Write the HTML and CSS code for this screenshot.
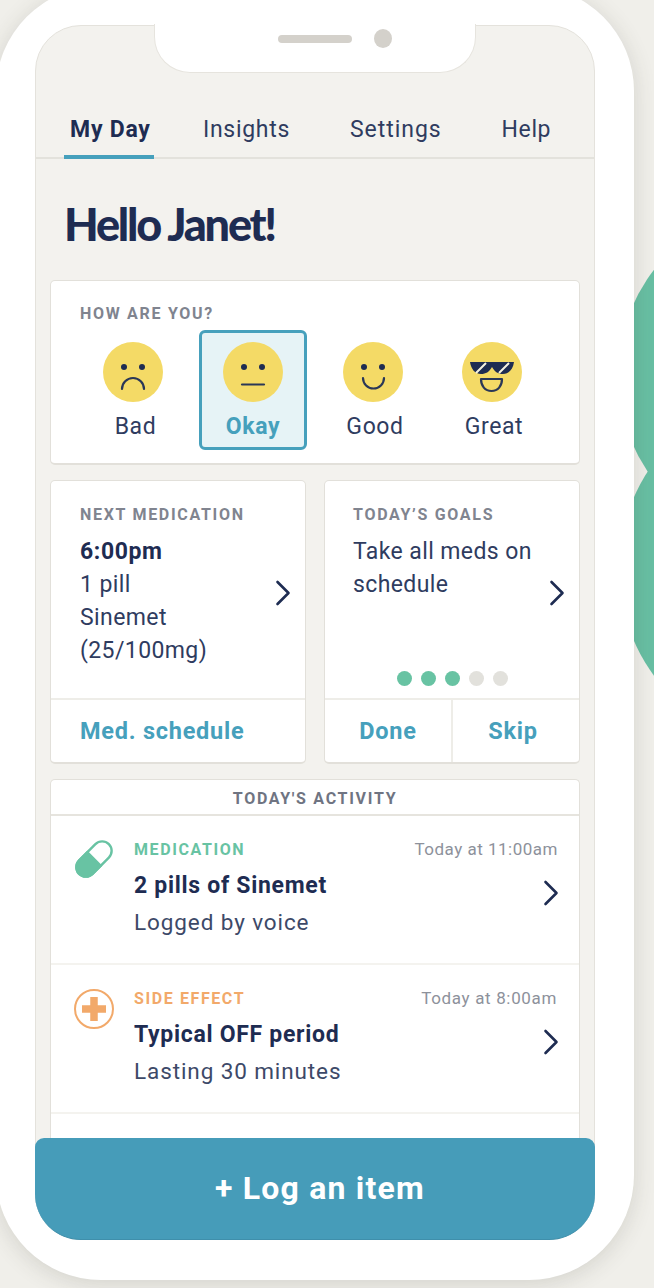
FILE: index.html
```html
<!DOCTYPE html>
<html lang="en">
<head>
<meta charset="utf-8">
<title>My Day</title>
<link rel="stylesheet" href="styles.css">
</head>
<body>
<div class="blob blob-top"></div>
<div class="blob blob-bottom"></div>
<div class="phone">
  <div class="notch">
    <span class="speaker"></span>
    <span class="camera"></span>
  </div>
  <main class="screen">
    <nav class="tabs">
      <a class="tab tab-active tab-day">My Day</a>
      <a class="tab tab-insights">Insights</a>
      <a class="tab tab-settings">Settings</a>
      <a class="tab tab-help">Help</a>
    </nav>
    <div class="content">
      <h1 class="greeting">Hello Janet!</h1>

      <section class="card mood-card">
        <h2 class="label">HOW ARE YOU?</h2>
        <div class="moods">
          <div class="mood mood-bad">
            <svg class="face" viewBox="0 0 60 60"><circle cx="30" cy="30" r="30" fill="#f4da66"/><circle cx="21" cy="25" r="3" fill="#1e2c52"/><circle cx="39" cy="25" r="3" fill="#1e2c52"/><path d="M19 47a11 11 0 0 1 22 0" fill="none" stroke="#2a3757" stroke-width="2.2" stroke-linecap="round"/></svg>
            <span class="mood-name">Bad</span>
          </div>
          <div class="mood mood-selected">
            <svg class="face" viewBox="0 0 60 60"><circle cx="30" cy="30" r="30" fill="#f4da66"/><circle cx="21" cy="25" r="3" fill="#1e2c52"/><circle cx="39" cy="25" r="3" fill="#1e2c52"/><path d="M19 42.500h22" fill="none" stroke="#2a3757" stroke-width="2.2" stroke-linecap="round"/></svg>
            <span class="mood-name">Okay</span>
          </div>
          <div class="mood mood-good">
            <svg class="face" viewBox="0 0 60 60"><circle cx="30" cy="30" r="30" fill="#f4da66"/><circle cx="21" cy="25" r="3" fill="#1e2c52"/><circle cx="39" cy="25" r="3" fill="#1e2c52"/><path d="M20 36a10.500 10.500 0 0 0 21 0" fill="none" stroke="#2a3757" stroke-width="2.200" stroke-linecap="round"/></svg>
            <span class="mood-name">Good</span>
          </div>
          <div class="mood mood-great">
            <svg class="face" viewBox="0 0 60 60"><circle cx="30" cy="30" r="30" fill="#f4da66"/><path d="M8 20h44c-1 7-5 12-11 12-5 0-8-2-11-7-3 5-6 7-11 7-6 0-10-5-11-12z" fill="#1e2c52"/><path d="M14 31l10-10M37 31l10-10" stroke="#f4f1e0" stroke-width="2"/><path d="M19 37h21c0 7-4 12-10.500 12S19 44 19 37z" fill="none" stroke="#2a3757" stroke-width="2.200" stroke-linejoin="round"/></svg>
            <span class="mood-name">Great</span>
          </div>
        </div>
      </section>

      <div class="pair">
        <section class="card tile">
          <div class="tile-body">
            <div class="tile-main">
              <h2 class="label">NEXT MEDICATION</h2>
              <p class="tile-text"><strong>6:00pm</strong><br>1 pill<br>Sinemet<br>(25/100mg)</p>
            </div>
            <svg class="chevron" viewBox="0 0 16 26"><path d="M2.500 2l11 11-11 11" fill="none" stroke="#1e2c52" stroke-width="2.600" stroke-linecap="round" stroke-linejoin="round"/></svg>
          </div>
          <div class="tile-foot"><a class="action action-left">Med. schedule</a></div>
        </section>
        <section class="card tile">
          <div class="tile-body tile-body-goals">
            <div class="tile-main">
              <h2 class="label">TODAY’S GOALS</h2>
              <p class="tile-text">Take all meds on<br>schedule</p>
            </div>
            <svg class="chevron" viewBox="0 0 16 26"><path d="M2.500 2l11 11-11 11" fill="none" stroke="#1e2c52" stroke-width="2.600" stroke-linecap="round" stroke-linejoin="round"/></svg>
            <div class="dots">
              <span class="dot dot-on"></span><span class="dot dot-on"></span><span class="dot dot-on"></span><span class="dot"></span><span class="dot"></span>
            </div>
          </div>
          <div class="tile-foot">
            <a class="action action-half">Done</a>
            <a class="action action-half">Skip</a>
          </div>
        </section>
      </div>

      <section class="card activity">
        <h2 class="label activity-head">TODAY'S ACTIVITY</h2>
        <article class="entry">
          <svg class="entry-icon" viewBox="0 0 40 40"><g transform="rotate(-45 20 20)"><rect x="-1" y="10.500" width="42" height="19" rx="9.500" fill="#fff" stroke="#68c3a3" stroke-width="2.400"/><path d="M20 10.500H8.500a9.500 9.500 0 0 0 0 19H20z" fill="#68c3a3" stroke="#68c3a3" stroke-width="2.400"/></g></svg>
          <div class="entry-text">
            <div class="entry-top"><span class="kind kind-med">MEDICATION</span><time class="when">Today at 11:00am</time></div>
            <h3 class="entry-title">2 pills of Sinemet</h3>
            <p class="entry-sub">Logged by voice</p>
          </div>
          <svg class="chevron entry-chevron" viewBox="0 0 16 26"><path d="M2.500 2l11 11-11 11" fill="none" stroke="#1e2c52" stroke-width="2.600" stroke-linecap="round" stroke-linejoin="round"/></svg>
        </article>
        <article class="entry">
          <svg class="entry-icon entry-icon-side" viewBox="0 0 40 40"><circle cx="20" cy="20" r="19" fill="none" stroke="#f2a96a" stroke-width="2"/><path d="M8 20h24M20 8v24" stroke="#f2a96a" stroke-width="7.500"/></svg>
          <div class="entry-text">
            <div class="entry-top"><span class="kind kind-side">SIDE EFFECT</span><time class="when when-short">Today at 8:00am</time></div>
            <h3 class="entry-title">Typical OFF period</h3>
            <p class="entry-sub">Lasting 30 minutes</p>
          </div>
          <svg class="chevron entry-chevron" viewBox="0 0 16 26"><path d="M2.500 2l11 11-11 11" fill="none" stroke="#1e2c52" stroke-width="2.600" stroke-linecap="round" stroke-linejoin="round"/></svg>
        </article>
        <div class="entry-empty"></div>
      </section>
    </div>
  </main>
  <button class="log-button">+ Log an item</button>
</div>
</body>
</html>
```
FILE: styles.css
```css
* { box-sizing: border-box; }

html, body {
  margin: 0;
  height: 1288px;
  overflow: hidden;
}

body {
  position: relative;
  background: #f0efea;
  font-family: "Roboto", "Liberation Sans", sans-serif;
  color: #1e2c52;
}

.blob {
  position: absolute;
  border-radius: 50%;
  background: #68bfa3;
}
.blob-top { left: 618px; top: 203px; width: 344px; height: 344px; }
.blob-bottom { left: 619px; top: 389px; width: 360px; height: 360px; }

.phone {
  position: relative;
  width: 638px;
  height: 1294px;
  margin: -14px 0 0 -4px;
  padding: 39px 39px 40px;
  background: #fff;
  border-radius: 105px;
  box-shadow: 0 4px 22px rgba(60, 60, 50, .16);
}

.notch {
  position: absolute;
  z-index: 2;
  left: 158px;
  top: 38px;
  width: 322px;
  height: 49px;
  display: flex;
  justify-content: center;
  align-items: flex-start;
  padding: 5px 0 0 39px;
  gap: 22px;
  background: #fff;
  border: 1px solid #e6e4de;
  border-top: 0;
  border-radius: 0 0 36px 36px;
}
.speaker {
  width: 74px;
  height: 8px;
  margin-top: 6px;
  border-radius: 4px;
  background: #d4d1cb;
}
.camera {
  width: 18px;
  height: 19px;
  border-radius: 50%;
  background: #d4d1cb;
}

.screen {
  position: relative;
  height: 1215px;
  overflow: hidden;
  background: #f3f2ee;
  border: 1px solid #e4e2dc;
  border-radius: 46px;
}

.tabs {
  position: relative;
  height: 133px;
  border-bottom: 2px solid #e3e2dc;
  display: flex;
  align-items: flex-end;
  font-size: 23px;
  letter-spacing: .6px;
  color: #2f3c5f;
}
.tab {
  display: block;
  padding-bottom: 14px;
  line-height: 27px;
  white-space: nowrap;
}
.tab-day { margin-left: 28px; width: 90px; padding-left: 6px; margin-bottom: -2px; border-bottom: 4px solid #46a0bc; padding-bottom: 12px; font-weight: 700; letter-spacing: .75px; color: #1e2c52; }
.tab-insights { margin-left: 49px; letter-spacing: .7px; }
.tab-settings { margin-left: 60px; letter-spacing: .95px; }
.tab-help { margin-left: 60px; }

.content {
  padding: 0 14px;
}

.greeting {
  margin: 38px 0 0 14px;
  height: 83px;
  font-family: "Lato", "Liberation Sans", sans-serif;
  font-size: 45px;
  line-height: 54px;
  font-weight: 900;
  letter-spacing: -2.200px;
  color: #1e2c52;
}

.card {
  background: #fff;
  border: 1px solid #e2e0da;
  border-bottom-width: 2px;
  border-radius: 5px;
}

.label {
  margin: 0;
  font-size: 16px;
  line-height: 18px;
  font-weight: 700;
  letter-spacing: 1.700px;
  color: #80848f;
}

.mood-card {
  height: 185px;
  padding: 24px 0 0 29px;
}
.moods {
  display: flex;
  gap: 12px;
  margin: 7px 0 0 -1px;
}
.mood {
  width: 108px;
  height: 120px;
  padding-top: 12px;
  display: flex;
  flex-direction: column;
  align-items: center;
  border: 3px solid transparent;
  border-radius: 6px;
}
.mood-selected {
  background: #e6f3f6;
  border-color: #46a0bc;
}
.face {
  width: 60px;
  height: 60px;
  margin-top: -3px;
}
.mood-name {
  margin-top: 12px;
  font-size: 23px;
  line-height: 26px;
  letter-spacing: .6px;
  color: #2f3c5f;
}
.mood-bad .mood-name { margin-left: 5px; }
.mood-good .mood-name { margin-left: 4px; }
.mood-great .face { margin-left: -2px; }
.mood-great .mood-name { margin-left: 2px; }
.mood-selected .mood-name {
  font-weight: 700;
  color: #46a0bc;
}

.pair {
  display: flex;
  gap: 18px;
  margin-top: 15px;
}
.tile {
  flex: 1;
  height: 284px;
  display: flex;
  flex-direction: column;
}
.tile-body {
  position: relative;
  flex: 1;
  padding: 25px 14px 0 29px;
  display: flex;
  align-items: flex-start;
  justify-content: space-between;
}
.tile-body-goals { padding-left: 28px; }
.tile-text {
  margin: 11px 0 0;
  font-size: 23px;
  line-height: 33px;
  letter-spacing: .4px;
  color: #2f3c5f;
  white-space: nowrap;
}
.tile-text strong {
  font-weight: 700;
  letter-spacing: .6px;
  color: #1e2c52;
}
.chevron {
  width: 16px;
  height: 26px;
  flex: none;
  margin-top: 74px;
}
.dots {
  position: absolute;
  left: 0;
  right: 0;
  bottom: 12px;
  display: flex;
  justify-content: center;
  gap: 9px;
}
.dot {
  width: 15px;
  height: 15px;
  border-radius: 50%;
  background: #e2e1dc;
}
.dot-on { background: #68c3a3; }

.tile-foot {
  height: 64px;
  display: flex;
  border-top: 2px solid #eeede8;
}
.action {
  font-size: 23.500px;
  line-height: 62px;
  font-weight: 700;
  letter-spacing: .75px;
  color: #46a0bc;
}
.action-left { padding-left: 29px; }
.action-half {
  flex: 1;
  text-align: center;
}
.action-half:first-child {
  flex: none;
  width: 128px;
  border-right: 2px solid #eeede8;
}
.action-half:last-child { padding-right: 6px; }

.activity {
  margin-top: 15px;
  border-bottom: 0;
}
.activity-head {
  height: 36px;
  line-height: 38px;
  text-align: center;
  border-bottom: 2px solid #e6e4de;
  color: #6f7482;
}
.entry {
  position: relative;
  height: 149px;
  padding: 22px 21px 0 23px;
  display: flex;
  border-bottom: 2px solid #f4f3ef;
}
.entry-icon {
  width: 40px;
  height: 40px;
  flex: none;
  margin-top: 1px;
}
.entry-icon-side { margin-top: 2px; }
.entry-text {
  flex: 1;
  margin-left: 20px;
}
.entry-top {
  display: flex;
  justify-content: space-between;
  align-items: center;
  height: 22px;
}
.kind {
  font-size: 16px;
  font-weight: 700;
  letter-spacing: 1.600px;
}
.kind-med { color: #68c3a3; }
.kind-side { color: #f2a96a; }
.when {
  font-size: 17px;
  letter-spacing: .5px;
  color: #8d919b;
}
.when-short { margin-right: 1px; letter-spacing: .65px; }
.entry-title {
  margin: 13px 0 0;
  font-size: 23px;
  line-height: 26px;
  font-weight: 700;
  letter-spacing: .7px;
  color: #1e2c52;
}
.entry-sub {
  margin: 10px 0 0;
  font-size: 22.500px;
  line-height: 26px;
  letter-spacing: .9px;
  color: #3d4968;
}
.entry-chevron {
  position: absolute;
  right: 20px;
  top: 64px;
  margin: 0;
}
.entry-empty { height: 60px; }

.log-button {
  position: absolute;
  left: 39px;
  right: 39px;
  bottom: 40px;
  height: 102px;
  padding: 0 0 2px 10px;
  border: 0;
  border-bottom: 1px solid #3f8fab;
  border-radius: 9px 9px 46px 46px;
  background: #469cb9;
  color: #fff;
  font-family: "Roboto", "Liberation Sans", sans-serif;
  font-size: 32px;
  font-weight: 700;
  letter-spacing: 1.200px;
}
```
